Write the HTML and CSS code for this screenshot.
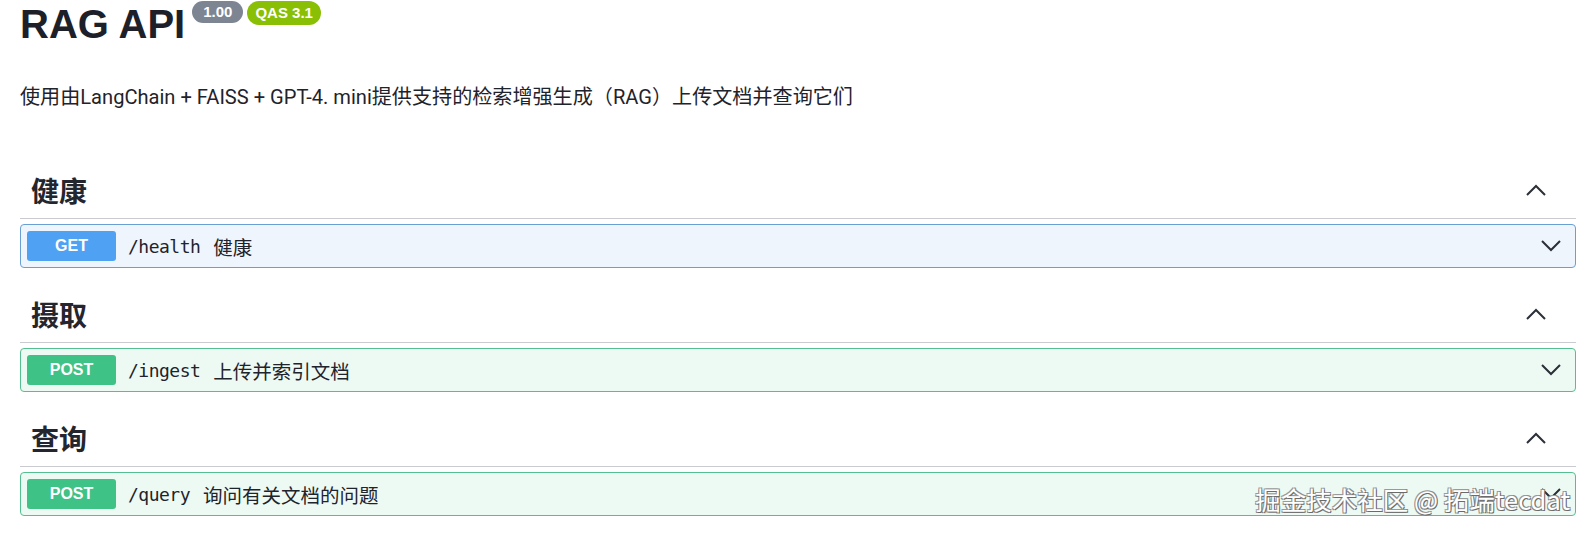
FILE: index.html
```html
<!DOCTYPE html>
<html lang="zh">
<head>
<meta charset="utf-8">
<title>RAG API</title>
<link rel="stylesheet" href="styles.css">
</head>
<body>
<div class="page">
  <div class="info">
    <h1 class="title">RAG API</h1>
    <span class="badge badge-version">1.00</span>
    <span class="badge badge-oas">QAS 3.1</span>
  </div>
  <p class="desc">使用由LangChain + FAISS + GPT-4. mini提供支持的检索增强生成（RAG）上传文档并查询它们</p>

  <section class="tag">
    <div class="tag-head">
      <h3 class="tag-name">健康</h3>
      <svg class="chev-up" width="20" height="12" viewBox="0 0 20 12"><polyline points="1,11 10,2 19,11" fill="none" stroke="#2b2f38" stroke-width="2"/></svg>
    </div>
    <div class="opblock op-get">
      <span class="method m-get">GET</span>
      <span class="path">/health</span>
      <span class="summary">健康</span>
      <svg class="chev-down" width="20" height="12" viewBox="0 0 20 12"><polyline points="1,1 10,10 19,1" fill="none" stroke="#2b2f38" stroke-width="2"/></svg>
    </div>
  </section>

  <section class="tag">
    <div class="tag-head">
      <h3 class="tag-name">摄取</h3>
      <svg class="chev-up" width="20" height="12" viewBox="0 0 20 12"><polyline points="1,11 10,2 19,11" fill="none" stroke="#2b2f38" stroke-width="2"/></svg>
    </div>
    <div class="opblock op-post">
      <span class="method m-post">POST</span>
      <span class="path">/ingest</span>
      <span class="summary">上传并索引文档</span>
      <svg class="chev-down" width="20" height="12" viewBox="0 0 20 12"><polyline points="1,1 10,10 19,1" fill="none" stroke="#2b2f38" stroke-width="2"/></svg>
    </div>
  </section>

  <section class="tag">
    <div class="tag-head">
      <h3 class="tag-name">查询</h3>
      <svg class="chev-up" width="20" height="12" viewBox="0 0 20 12"><polyline points="1,11 10,2 19,11" fill="none" stroke="#2b2f38" stroke-width="2"/></svg>
    </div>
    <div class="opblock op-post">
      <span class="method m-post">POST</span>
      <span class="path">/query</span>
      <span class="summary">询问有关文档的问题</span>
      <svg class="chev-down" width="20" height="12" viewBox="0 0 20 12"><polyline points="1,1 10,10 19,1" fill="none" stroke="#2b2f38" stroke-width="2"/></svg>
    </div>
  </section>
</div>
<div class="watermark">掘金技术社区 @ 拓端tecdat</div>
</body>
</html>
```
FILE: styles.css
```css
html, body {
  margin: 0;
  padding: 0;
  background: #ffffff;
}
body {
  position: relative;
  width: 1587px;
  height: 534px;
  overflow: hidden;
  font-family: "Roboto", "Noto Sans CJK SC", sans-serif;
  color: #3b4151;
}
.page {
  padding: 0 11px 0 20px;
}
.info {
  display: flex;
  align-items: flex-start;
}
.title {
  margin: 4px 0 0 0;
  font-family: "Liberation Sans", Arial, sans-serif;
  font-size: 40px;
  line-height: 40px;
  font-weight: 700;
  color: #1d2029;
}
.badge {
  display: inline-block;
  margin-top: 1px;
  font-family: "Liberation Sans", Arial, sans-serif;
  font-weight: 700;
  font-size: 15px;
  color: #ffffff;
  border-radius: 12px;
}
.badge-version {
  margin-left: 7px;
  height: 22px;
  line-height: 22px;
  padding: 0 11px;
  background: #7d8492;
}
.badge-oas {
  margin-left: 4px;
  height: 24px;
  line-height: 24px;
  padding: 0 8px;
  background: #89bf04;
}
.desc {
  margin: 39px 0 0 0;
  font-size: 20.1px;
  line-height: 28px;
  color: #1f232b;
}
.tag {
  margin-top: 50px;
}
.tag + .tag {
  margin-top: 17px;
}
.tag-head {
  display: flex;
  align-items: center;
  justify-content: space-between;
  height: 57px;
  padding: 0 30px 0 11px;
  border-bottom: 1px solid #c9cbd0;
}
.tag-name {
  margin: 0;
  font-family: "Noto Sans CJK SC", sans-serif;
  font-size: 28px;
  line-height: 36px;
  font-weight: 700;
  color: #23262e;
}
.chev-up, .chev-down {
  display: block;
}
.opblock {
  display: flex;
  align-items: center;
  margin-top: 5px;
  height: 42px;
  padding: 0 14px 0 6px;
  border: 1px solid;
  border-radius: 4px;
}
.op-get {
  background: #eef5fd;
  border-color: #6a9fd4;
}
.op-post {
  background: #edfaf4;
  border-color: #56bf92;
}
.method {
  width: 89px;
  height: 30px;
  line-height: 30px;
  text-align: center;
  border-radius: 3px;
  font-family: "Liberation Sans", Arial, sans-serif;
  font-size: 16px;
  font-weight: 700;
  color: #ffffff;
}
.m-get {
  background: #4ea1f3;
}
.m-post {
  background: #3fc285;
}
.path {
  margin-left: 12px;
  font-family: "DejaVu Sans Mono", "Liberation Mono", monospace;
  font-size: 18px;
  letter-spacing: -0.5px;
  color: #1f232b;
}
.summary {
  margin-left: 13px;
  flex: 1;
  font-family: "Noto Sans CJK SC", sans-serif;
  font-size: 19.5px;
  color: #1f232b;
}
.watermark {
  position: absolute;
  right: 17px;
  top: 484px;
  font-family: "Noto Sans CJK SC", sans-serif;
  font-size: 25.5px;
  line-height: 30px;
  color: #ffffff;
  text-shadow: 1px 1px 0 #6b6b6b, -1px -1px 0 #9a9a9a, 1px -1px 0 #8a8a8a, -1px 1px 0 #8a8a8a;
}
```
